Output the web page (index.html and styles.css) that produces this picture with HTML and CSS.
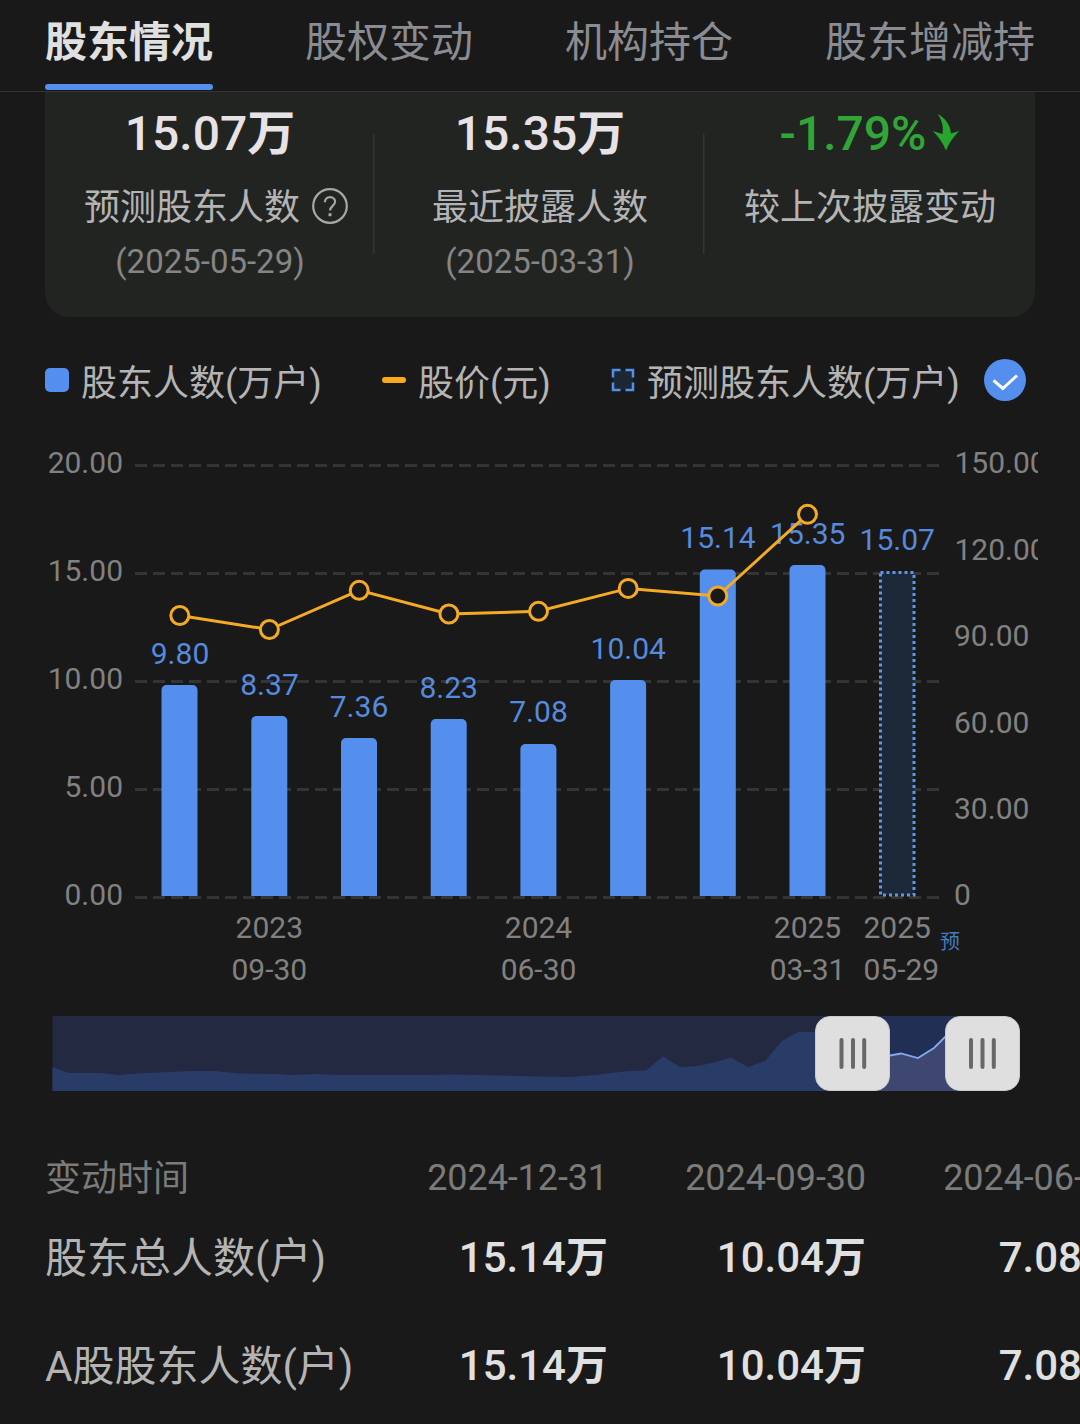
FILE: index.html
```html
<!DOCTYPE html>
<html lang="zh-CN">
<head>
<meta charset="utf-8">
<title>股东情况</title>
<link rel="stylesheet" href="styles.css">
</head>
<body>
<nav class="tabs">
  <a class="tab tab-active">股东情况</a>
  <a class="tab">股权变动</a>
  <a class="tab">机构持仓</a>
  <a class="tab">股东增减持</a>
</nav>

<section class="summary">
  <div class="stat">
    <div class="stat-value">15.07<b>万</b></div>
    <div class="stat-label stat-label-help">预测股东人数
      <svg class="help" viewBox="0 0 38 38"><circle cx="19" cy="19" r="16.8"/><path d="M13.9 15.2c0-3.1 2.2-5.1 5.2-5.1s5 2 5 4.7c0 3.9-5 4.3-5 8.6"/><path class="help-dot" d="M17.5 26.2h3v3h-3z"/></svg>
    </div>
    <div class="stat-date">(2025-05-29)</div>
  </div>
  <div class="stat">
    <div class="stat-value">15.35<b>万</b></div>
    <div class="stat-label">最近披露人数</div>
    <div class="stat-date">(2025-03-31)</div>
  </div>
  <div class="stat">
    <div class="stat-value stat-down">-1.79%<svg class="arrow" viewBox="0 0 28 38"><path d="M5.500 0C13 4 18.500 11 19 20L27.500 17.500C22 23 17 30 14 37.500C11 30 6 23 .500 17.500L10.500 20.500C11.500 12 9.500 6 5.500 0Z"/></svg></div>
    <div class="stat-label">较上次披露变动</div>
  </div>
</section>

<div class="legend">
  <div class="legend-item legend-bar"><i class="key key-bar"></i>股东人数(万户)</div>
  <div class="legend-item legend-line"><i class="key key-line"></i>股价(元)</div>
  <div class="legend-item legend-forecast">
    <svg class="key key-forecast" viewBox="0 0 24 24"><rect x="2" y="2" width="20" height="20"/><path d="M2 9.500V2H9.500M14.500 2H22V9.500M22 14.500V22H14.500M9.500 22H2V14.500"/></svg>预测股东人数(万户)
  </div>
  <svg class="check" viewBox="0 0 42 42"><circle cx="21" cy="21" r="21"/><path d="M9.500 21.300L18.800 29.500L33 16.500"/></svg>
</div>

<svg class="chart" viewBox="0 420 1080 570">
  <defs><clipPath id="axis-clip"><rect x="940" y="420" width="98" height="570"/></clipPath></defs>
  <path class="grid" d="M135 465.500H940M135 573.500H940M135 681.500H940M135 789.500H940M135 897.500H940"/>
  <g class="axis axis-left">
    <text x="123" y="473">20.00</text><text x="123" y="581">15.00</text><text x="123" y="689">10.00</text><text x="123" y="797">5.00</text><text x="123" y="905">0.00</text>
  </g>
  <g class="axis" clip-path="url(#axis-clip)">
    <text x="954.500" y="473">150.00</text><text x="954.500" y="560">120.00</text><text x="954" y="646">90.00</text><text x="954" y="733">60.00</text><text x="954" y="819">30.00</text><text x="954" y="905">0</text>
  </g>
  <g class="bars">
    <path d="M161.500 896V690a5 5 0 0 1 5-5h26a5 5 0 0 1 5 5V896Z"/>
    <path d="M251.300 896V721a5 5 0 0 1 5-5h26a5 5 0 0 1 5 5V896Z"/>
    <path d="M341 896V743a5 5 0 0 1 5-5h26a5 5 0 0 1 5 5V896Z"/>
    <path d="M430.700 896V724a5 5 0 0 1 5-5h26a5 5 0 0 1 5 5V896Z"/>
    <path d="M520.400 896V749a5 5 0 0 1 5-5h26a5 5 0 0 1 5 5V896Z"/>
    <path d="M610.100 896V685a5 5 0 0 1 5-5h26a5 5 0 0 1 5 5V896Z"/>
    <path d="M699.800 896V574.500a5 5 0 0 1 5-5h26a5 5 0 0 1 5 5V896Z"/>
    <path d="M789.500 896V570a5 5 0 0 1 5-5h26a5 5 0 0 1 5 5V896Z"/>
  </g>
  <rect class="forecast" x="880.500" y="572.500" width="33.500" height="322.500"/>
  <g class="values">
    <text x="180" y="664">9.80</text><text x="269.500" y="695">8.37</text><text x="359" y="717">7.36</text><text x="448.700" y="698">8.23</text><text x="538.500" y="722">7.08</text><text x="628.200" y="659">10.04</text><text x="718" y="548">15.14</text><text x="807.700" y="544">15.35</text><text x="897.300" y="550">15.07</text>
  </g>
  <polyline class="price" points="179.800,615.500 269.400,629.500 359.200,590.300 448.900,614 538.500,611.300 628.200,588.400 717.800,596 807.500,514.300"/>
  <g class="dots">
    <circle cx="179.800" cy="615.500" r="9"/><circle cx="269.400" cy="629.500" r="9"/><circle cx="359.200" cy="590.300" r="9"/><circle cx="448.900" cy="614" r="9"/><circle cx="538.500" cy="611.300" r="9"/><circle cx="628.200" cy="588.400" r="9"/><circle cx="717.800" cy="596" r="9"/><circle cx="807.500" cy="514.300" r="9"/>
  </g>
  <g class="axis axis-dates">
    <text x="269.300" y="938">2023</text><text x="269.300" y="980">09-30</text>
    <text x="538.500" y="938">2024</text><text x="538.500" y="980">06-30</text>
    <text x="807.500" y="938">2025</text><text x="807.500" y="980">03-31</text>
  </g>
  <g class="axis"><text x="863.500" y="938">2025</text><text x="863.500" y="980">05-29</text></g>
  <text class="forecast-tag" x="940" y="948.500">预</text>
</svg>

<svg class="slider" viewBox="52 1015 968 77">
  <rect class="track" x="52.500" y="1016" width="930" height="75"/>
  <path class="history" d="M52.500 1067L69 1073H100L119 1075L136 1073.500L190 1071H215L240 1073.500L275 1074L290 1075L315 1074L340 1075H420L455 1074.500L500 1075.500L540 1076.500L570 1077L590 1075.500L600 1074.500L628 1071L646 1070.500L663 1056.500L680 1067L697 1066L714 1062.500L731 1057.500L748 1067L765 1061L782 1041L798 1032H850V1091H52.500Z"/>
  <rect class="window" x="853" y="1016" width="130" height="75"/>
  <path class="window-area" d="M853 1058L890 1055.500L901 1053.500L918 1058L934 1048L948 1034H983V1091H853Z"/>
  <path class="window-line" d="M880 1056.500L890 1055.500L901 1053.500L918 1058L934 1048L948 1034"/>
  <g class="handle">
    <rect x="815.500" y="1016.500" width="74" height="74" rx="14.500"/>
    <path d="M841.500 1040V1067M853 1040V1067M864.200 1040V1067"/>
    <rect x="945.500" y="1016.500" width="74" height="74" rx="14.500"/>
    <path d="M971 1040V1067M982.500 1040V1067M993.800 1040V1067"/>
  </g>
</svg>

<section class="table">
  <div class="row row-head"><span class="name">变动时间</span><span class="cell">2024-12-31</span><span class="cell">2024-09-30</span><span class="cell">2024-06-30</span></div>
  <div class="row"><span class="name">股东总人数(户)</span><span class="cell">15.14<b>万</b></span><span class="cell">10.04<b>万</b></span><span class="cell">7.08<b>万</b></span></div>
  <div class="row"><span class="name">A股股东人数(户)</span><span class="cell">15.14<b>万</b></span><span class="cell">10.04<b>万</b></span><span class="cell">7.08<b>万</b></span></div>
</section>
</body>
</html>
```
FILE: styles.css
```css
* { box-sizing: border-box; }

body {
  margin: 0;
  width: 1080px;
  height: 1424px;
  overflow: hidden;
  background: #191919;
  color: #b4b4b4;
  font-family: Roboto, "Noto Sans CJK SC", sans-serif;
}

svg { display: block; }

.tabs {
  display: flex;
  gap: 92px;
  height: 92px;
  padding-left: 45px;
  border-bottom: 1px solid #2f3531;
  white-space: nowrap;
}
.tab {
  height: 90px;
  padding-top: 1px;
  font-size: 42px;
  line-height: 83px;
  color: #8b8b92;
}
.tab-active {
  color: #e0e0e0;
  font-weight: 700;
}
.tab-active::after {
  content: "";
  display: block;
  height: 6px;
  border-radius: 3px;
  background: #548fee;
}

.summary {
  display: grid;
  grid-template-columns: repeat(3, 330px);
  height: 225px;
  margin: 0 45px;
  padding-top: 12px;
  border-radius: 0 0 24px 24px;
  background: #222422;
}
.stat {
  display: flex;
  flex-direction: column;
  align-items: center;
  background: linear-gradient(#343634, #343634) no-repeat right 1px top 30px / 1.5px 120px;
}
.stat:last-child { background: none; }
.stat-value {
  display: flex;
  margin-bottom: 19px;
  font-size: 48px;
  font-weight: 500;
  line-height: 60px;
  color: #e6e2e6;
}
.stat-down { color: #31a637; }
.arrow {
  width: 28px;
  height: 37px;
  margin: 10px 0 0 6px;
  fill: #27a52d;
}
.stat-label {
  display: flex;
  gap: 11px;
  margin-bottom: 9px;
  font-size: 36px;
  line-height: 50px;
}
.stat-label-help { padding-left: 13px; }
.help {
  width: 38px;
  height: 38px;
  margin-top: 4px;
  fill: none;
  stroke: #a6a8a6;
  stroke-width: 2.2;
}
.help-dot { fill: #a6a8a6; stroke: none; }
.stat-date {
  font-size: 33px;
  line-height: 40px;
  color: #858585;
}

.legend {
  display: flex;
  align-items: center;
  height: 48px;
  margin: 43px 0 12px 45px;
  font-size: 36px;
  line-height: 48px;
  white-space: nowrap;
}
.legend-item {
  display: flex;
  align-items: center;
  gap: 12px;
}
.legend-bar { width: 337px; }
.legend-line { width: 229px; }
.legend-forecast { width: 373px; }
.key { margin-bottom: 8px; }
.key-bar {
  width: 24px;
  height: 24px;
  border-radius: 5px;
  background: #548fee;
}
.key-line {
  width: 24px;
  height: 6px;
  border-radius: 3px;
  background: #f9a91d;
}
.key-forecast { width: 24px; height: 24px; }
.key-forecast rect { fill: #1b2733; }
.key-forecast path { fill: none; stroke: #548fee; stroke-width: 2.500; }
.check { width: 42px; height: 42px; margin-bottom: 8px; }
.check circle { fill: #548fee; }
.check path { fill: none; stroke: #fff; stroke-width: 3; }

.chart { width: 1080px; height: 570px; }
.grid { stroke: #343434; stroke-width: 3; stroke-dasharray: 12 6; }
.axis { font-size: 30px; fill: #818181; }
.axis-left { text-anchor: end; }
.axis-dates { text-anchor: middle; }
.bars { fill: #548fee; }
.forecast {
  fill: #1b2938;
  stroke: #6096e6;
  stroke-width: 3;
  stroke-dasharray: 3 3;
}
.values { font-size: 30px; text-anchor: middle; fill: #568ade; }
.price { fill: none; stroke: #f5aa25; stroke-width: 3; }
.dots { fill: #191919; stroke: #f5aa25; stroke-width: 3; }
.forecast-tag { font-size: 20px; fill: #3f7dbd; }

.slider { width: 968px; height: 77px; margin: 25px 0 0 52px; }
.track { fill: #222941; }
.history { fill: #293c68; }
.window { fill: #202f53; }
.window-area { fill: #3d4770; }
.window-line { fill: none; stroke: #84a8f2; stroke-width: 1.800; }
.handle rect { fill: #dfdfdf; stroke: #cbcbcb; stroke-width: 1; }
.handle path { stroke: #686868; stroke-width: 4; stroke-linecap: round; }

.table { padding: 61px 0 0 45px; }
.row {
  display: grid;
  grid-template-columns: 305px repeat(3, 258px);
  height: 108px;
  font-size: 42px;
  line-height: 108px;
  white-space: nowrap;
}
.name { padding-top: 1px; }
.cell {
  text-align: right;
  font-weight: 500;
  color: #e0e0e0;
}
.row-head {
  height: 51px;
  font-size: 36px;
  line-height: 50px;
  color: #7b7b7b;
}
.row-head .cell {
  font-weight: 400;
  letter-spacing: -0.1px;
  color: #7b7b7b;
}
```
